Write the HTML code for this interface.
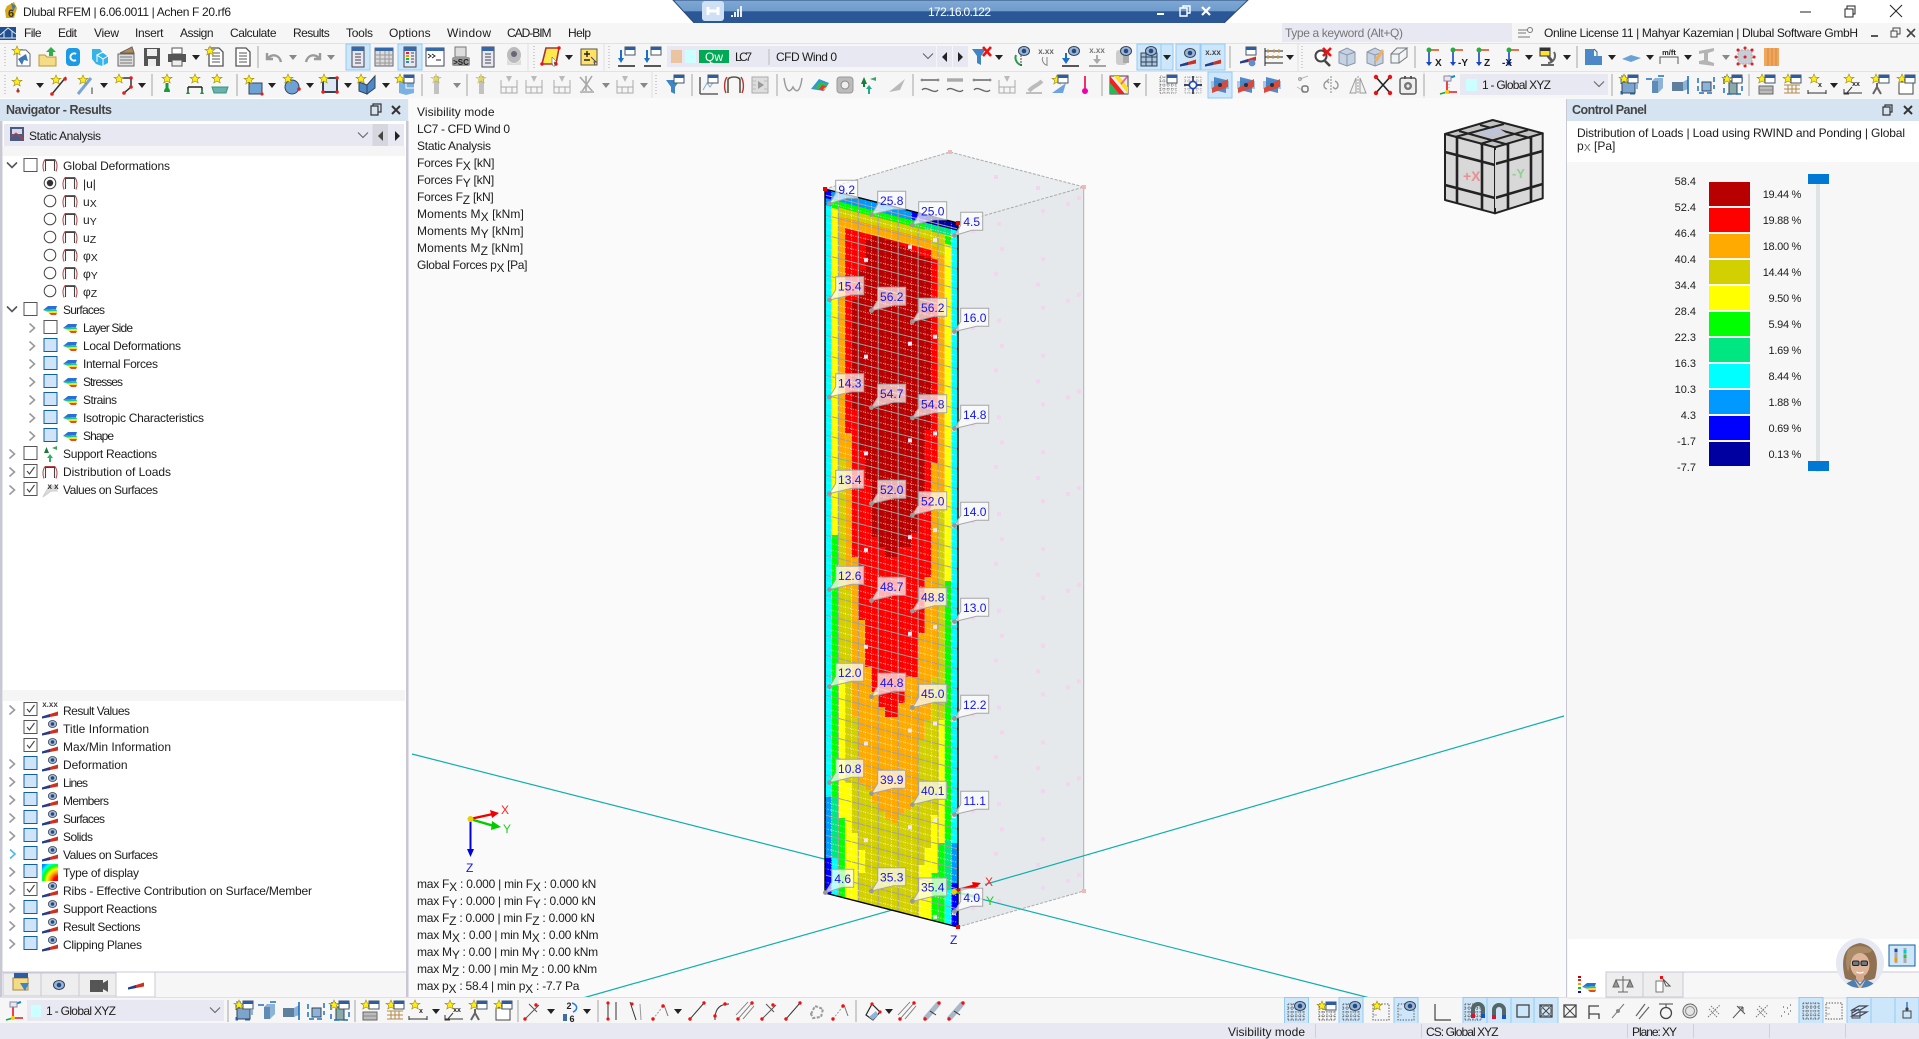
<!DOCTYPE html>
<html lang="en"><head><meta charset="utf-8"><title>Dlubal RFEM</title>
<style>
html,body{margin:0;padding:0;background:#f5f5f5;width:1919px;height:1039px;overflow:hidden}
svg{position:absolute;left:0;top:0;display:block}
text{font-family:"Liberation Sans",sans-serif;font-size:12px;fill:#1c1c1c}
.n{font-size:11px}
.p{letter-spacing:-.3px}
.h{font-size:12.5px;font-weight:bold;fill:#444}
.lb{font-size:12px;fill:#1414f0;text-anchor:middle}
.s{font-size:10.5px}
.g{fill:#777}
.e{text-anchor:end}
.m{letter-spacing:-.24px}
.f{letter-spacing:-.2px}
.k{letter-spacing:.1px}
.q{letter-spacing:-.35px}
</style></head><body>
<svg width="1919" height="1039" viewBox="0 0 1919 1039" xmlns="http://www.w3.org/2000/svg">
<defs>
<linearGradient id="rdp" x1="0" y1="0" x2="0" y2="1"><stop offset="0" stop-color="#7fa8d4"/><stop offset=".42" stop-color="#6f9ccb"/><stop offset=".45" stop-color="#2b5797"/><stop offset="1" stop-color="#2b5797"/></linearGradient>
<radialGradient id="rb" cx="1" cy="1" r="1.3"><stop offset=".2" stop-color="#f00"/><stop offset=".4" stop-color="#fa0"/><stop offset=".55" stop-color="#ff0"/><stop offset=".7" stop-color="#0f0"/><stop offset=".85" stop-color="#0ff"/><stop offset="1" stop-color="#08f"/></radialGradient>
<clipPath id="wall"><path d="M825 189 958 223V927L825 893z"/></clipPath>
<clipPath id="face"><path d="M825 189 950 152 1084 187V891L958 927 958 223z"/></clipPath>
<clipPath id="av"><ellipse cx="1860" cy="963" rx="24" ry="25"/></clipPath>
<pattern id="grid" patternUnits="userSpaceOnUse" width="19.95" height="20" patternTransform="matrix(1 .2556 0 1 825 189)">
<path d="M13.3 0V20M0 6H19.95" stroke="#a0a0a0" stroke-width="1" fill="none"/>
<path d="M0 0V20M6.65 0V20M0 13H19.95M0 19.5H19.95" stroke="#fff" stroke-width=".9" stroke-dasharray="1 1.6" opacity=".75" fill="none"/>
</pattern>
<pattern id="pk" patternUnits="userSpaceOnUse" x="0" y="172" width="1919" height="96.7">
<path fill="#f1d6ee" d="M994 3h4v4h-4zM1036 14h4v4h-4zM1077 24h4v4h-4zM1066 30h4v4h-4zM1041 37h4v4h-4zM997 50h4v4h-4zM971 57h4v4h-4zM1000 75h4v4h-4zM1041 85h4v4h-4z"/>
</pattern>
<pattern id="wh" patternUnits="userSpaceOnUse" x="0" y="172" width="1919" height="96.7">
<path fill="#f3e6f2" d="M864 86h4v4h-4zM908 73h4v4h-4zM933 66h4v4h-4zM952 62h4v4h-4z"/>
</pattern>

<path id="sp" d="M0-11V11" stroke="#a4a4a4"/>
<path id="d" d="M-4-2H4L0 3z" fill="#222"/>
<path id="dg" d="M-4-2H4L0 3z" fill="#888"/>
<rect id="ac" x="-12" y="-13" width="24" height="26" fill="#cde6f9" stroke="#93c9f5"/>
<path id="st" fill="#ffec1a" stroke="#998a10" stroke-width=".6" d="M0-5 1.4-1.8 5-1.6 2.2.4 3.2 4 0 2-3.2 4-2.2.4-5-1.6-1.4-1.8z"/>
<g id="w"><rect x="-5" y="-4" width="10" height="8" fill="#fff" stroke="#456"/><rect x="-5" y="-4" width="10" height="3" fill="#2a5ca8"/></g>
<g id="doc"><path d="M-7-9H3L7-5V9H-7z" fill="#fff" stroke="#555" stroke-width="1.3"/><path d="M-4-4H4M-4-1H4M-4 2H4M-4 5H4" stroke="#555"/></g>
<g id="i1"><path d="M-5-7H4L8-3V9H-5z" fill="#fff" stroke="#667"/><path d="M-4 2 4-3 6 4 2 3 0 8z" fill="#3a76b8"/><use href="#st" x="-5" y="-6"/></g>
<g id="i2"><path d="M-9-2H-3L-1 0H8V9H-9z" fill="#f4dc86" stroke="#b8993c"/><path d="M3-10 8-5H5V-1H1V-5H-2z" fill="#2fae4a"/></g>
<g id="i3"><rect x="-7" y="-9" width="14" height="18" rx="4" fill="#1b9ae6"/><path d="M3-3A3.6 3.6 0 1 0 3 3" stroke="#fff" stroke-width="2" fill="none"/></g>
<g id="i4"><path d="M-8-8H0L3-4 8-2V6L2 9-4 7-8 2z" fill="#35b4ec"/><path d="M-3-2 3-5 8-1 3 2zM3 2V9M-3-2V5" stroke="#fff" fill="none"/></g>
<g id="i5"><rect x="-8" y="-3" width="16" height="12" fill="#ddd" stroke="#666"/><path d="M-6 0H6M-6 3H6M-6 6H6" stroke="#777"/><path d="M-6-4 6-10 8-4z" fill="#b5895a" stroke="#665"/></g>
<g id="i6"><path d="M-8-9H8V9H-8z" fill="#555"/><rect x="-5" y="-8" width="10" height="7" fill="#eee"/><rect x="-4" y="2" width="8" height="7" fill="#eee"/></g>
<g id="i7"><rect x="-5" y="-9" width="10" height="6" fill="#fff" stroke="#555"/><rect x="-9" y="-3" width="18" height="8" fill="#555"/><rect x="-5" y="3" width="10" height="6" fill="#eee" stroke="#555"/></g>
<g id="i8"><use href="#doc"/><use href="#st" x="-6" y="-6"/></g>
<path id="i10" d="M7 5C5-3-2-3-6 1M-7-4V2H-1" fill="none" stroke="#9a9a9a" stroke-width="2.4"/>
<path id="i11" d="M-7 5C-5-3 2-3 6 1M7-4V2H1" fill="none" stroke="#9a9a9a" stroke-width="2.4"/>
<g id="p1"><rect x="-6" y="-10" width="12" height="20" fill="#e8e8ee" stroke="#445"/><rect x="-6" y="-10" width="12" height="4" fill="#3468a8"/><path d="M-3-3H3M-3 0H3M-3 3H3M-3 6H3" stroke="#445"/></g>
<g id="p2"><rect x="-9" y="-9" width="18" height="18" fill="#dcdcdc" stroke="#667"/><rect x="-9" y="-9" width="18" height="3" fill="#3468a8"/><path d="M-9-2H9M-9 2H9M-9 6H9M-4-6V9M1-6V9M5-6V9" stroke="#999"/></g>
<g id="p3"><rect x="-6" y="-10" width="12" height="20" fill="#e8e8ee" stroke="#445"/><rect x="-6" y="-10" width="12" height="4" fill="#3468a8"/><path d="M-4-4H-1" stroke="#e22" stroke-width="2"/><path d="M-4-1H-1" stroke="#e90" stroke-width="2"/><path d="M-4 2H-1" stroke="#2b2" stroke-width="2"/><path d="M-4 5H-1" stroke="#28d" stroke-width="2"/><path d="M1-4H4M1-1H4M1 2H4M1 5H4" stroke="#445"/></g>
<g id="p4"><rect x="-9" y="-9" width="18" height="18" fill="#fff" stroke="#445"/><rect x="-9" y="-9" width="18" height="3" fill="#3468a8"/><path d="M-7-3-4-1-7 1M-3-3 0-1-3 1M1 3H6" stroke="#222" fill="none"/></g>
<g id="p5"><rect x="-6" y="-10" width="11" height="10" fill="#ddd" stroke="#777"/><rect x="-9" y="0" width="18" height="9" rx="2" fill="#999"/><text x="0" y="8" style="font-size:8px;font-weight:bold;text-anchor:middle;fill:#222">&gt;SC</text></g>
<g id="p7"><ellipse cx="0" cy="-2" rx="7" ry="8" fill="#bbb"/><circle cy="-3" r="3" fill="#667"/><path d="M-7 2C-3 8 3 8 7 2V8H-7z" fill="#ddd"/></g>
<g id="a1"><path d="M-5-9H8L5 7H-9z" fill="#ffe94d" stroke="#a33" stroke-width="1.6"/><circle cx="-9" cy="7" r="1.7" fill="#e11"/><circle cx="5" cy="7" r="1.7" fill="#e11"/><circle cx="8" cy="-9" r="1.7" fill="#e11"/><path d="M1 0 6 5 3 5 4 9 2 9 1 6z" fill="#fff" stroke="#444" stroke-width=".5"/></g>
<g id="a2"><rect x="-8" y="-8" width="16" height="16" fill="#ffe168" stroke="#554"/><path d="M-5-3H1M-2-6V0M-5 3H1" stroke="#222" stroke-width="1.4"/><path d="M2 0 7 5 5 5 6 8" stroke="#446" fill="none"/></g>
<g id="a3"><use href="#w" x="4" y="-6"/><path d="M-8 9H9" stroke="#222" stroke-width="1.4"/><path d="M-5-7V2" stroke="#1b6fc6" stroke-width="2"/><path d="M-8 1H-2L-5 6z" fill="#1b6fc6"/></g>
<g id="f1"><path d="M-9-8H5L0-1V8L-4 6V-1z" fill="#3d85c6"/><path d="M2-10 10-1M10-10 2-1" stroke="#e11" stroke-width="2.6"/></g>
<g id="fn"><path d="M-9-5H5L0 2V9L-4 7V2z" fill="#3d85c6"/><use href="#w" x="4" y="-6"/></g>
<g id="ey"><ellipse cx="0" cy="0" rx="5.5" ry="4.5" fill="#9bb6d8" stroke="#345"/><circle r="2.3" fill="#234a80"/></g>
<g id="ey2"><ellipse cx="0" cy="0" rx="4.2" ry="3.5" fill="#a8bcd8" stroke="#345" stroke-width=".8"/><circle r="1.8" fill="#234a80"/></g>
<g id="e1"><use href="#ey" x="3" y="-6"/><path d="M-5-2C-7 3-3 8 1 8" fill="none" stroke="#2a9a4a" stroke-width="2"/><path d="M0-2V9" stroke="#444" stroke-dasharray="2 1"/></g>
<g id="x1"><text x="0" y="-3" style="font-size:8px;text-anchor:middle;font-weight:bold;fill:#666">x.xx</text><path d="M-3 0C-5 3-2 8 1 8M1 0V9" fill="none" stroke="#888"/></g>
<g id="e2"><use href="#ey" x="4" y="-6"/><path d="M-8 9H9" stroke="#222" stroke-width="1.4"/><path d="M-4-4V2" stroke="#1b6fc6" stroke-width="2"/><path d="M-8 1H0L-4 7z" fill="#1b6fc6"/></g>
<g id="x2"><text x="0" y="-4" style="font-size:8px;text-anchor:middle;font-weight:bold;fill:#777">x.xx</text><path d="M-8 9H9" stroke="#888" stroke-width="1.4"/><path d="M0-2V3" stroke="#aaa" stroke-width="2"/><path d="M-4 2H4L0 7z" fill="#aaa"/></g>
<g id="e3"><rect x="-7" y="-7" width="11" height="15" rx="3" fill="#ccc"/><rect x="0" y="-7" width="6" height="13" fill="#aaa"/><use href="#ey" x="3" y="-6"/></g>
<g id="g1"><rect x="-8" y="-4" width="16" height="13" fill="#a9c5df" stroke="#345"/><path d="M-8 0H8M-8 5H8M-3-4V9M3-4V9" stroke="#345"/><use href="#ey" x="2" y="-6"/></g>
<g id="wd"><path d="M-8 2.500 8-2.500V1.500L-8 4.500z" fill="#d03020"/><path d="M-8 2.500 0 0V3L-8 4.500z" fill="#1d3f94"/></g>
<g id="e4"><use href="#wd" y="5"/><use href="#ey" x="2" y="-4"/></g>
<g id="x4"><use href="#wd" y="5"/><text x="0" y="-2" style="font-size:8px;text-anchor:middle;font-weight:bold;fill:#444">x.xx</text></g>
<g id="r1"><use href="#wd" y="2"/><use href="#w" x="3" y="-6"/><circle cx="4" cy="6" r="3.4" fill="#5a8fd0"/></g>
<g id="r2"><path d="M-9-6H9M-9 0H9M-9 6H9M-9-9V9" stroke="#222"/><path d="M-7-6h2M-1-6h2M4-6h2M-7 0h2M-2 0h2M3 0h2" stroke="#b9924b" stroke-width="3"/></g>
<g id="s1"><circle cx="-2" cy="-1" r="5.5" fill="#fff" stroke="#444" stroke-width="2"/><path d="M2 4 7 9" stroke="#444" stroke-width="2.6"/><path d="M0-9 8-1M8-9 0-1" stroke="#e11" stroke-width="2.6"/></g>
<g id="c1"><path d="M-8-5 0-9 8-5V6L0 9-8 6z" fill="#c4d2e3" stroke="#8b97a8"/><path d="M-8-5 0-2 8-5M0-2V9" stroke="#8b97a8" fill="none"/></g>
<g id="c2"><use href="#c1"/><path d="M-1 3 7-8 9-6 2 5z" fill="#f0b060"/></g>
<g id="c3"><path d="M-8-3 0-3V6H-8zM-8-3-2-9H8L0-3M8-9V0L0 6" fill="#eef3f8" stroke="#777"/></g>
<g id="ax"><path d="M0-7V7" stroke="#1746c8" stroke-width="1.6"/><path d="M-3 5H3L0 9z" fill="#1746c8"/><path d="M0-7H10" stroke="#e1521b" stroke-width="1.6"/><circle cy="-7" r="2.5" fill="#2caa3c"/></g>
<g id="m1"><rect x="-8" y="-9" width="10" height="8" fill="#ffe22c" stroke="#333"/><path d="M-8-9H2V-6H-8z" fill="#333"/><path d="M6-5C9 0 5 6 0 6M-7 8H6" stroke="#666" fill="none" stroke-width="2"/><path d="M0-1 4 4" stroke="#555" stroke-width="3"/></g>
<g id="l1"><path d="M-8-8H1V-1H9V8H-8z" fill="#4c88c6"/><path d="M1-8 4-5V-1" fill="none" stroke="#2c5f98"/></g>
<g id="l2"><path d="M-9 2 0-2 10 1 0 5z" fill="#6aa2d4"/></g>
<g id="l3"><text x="0" y="-2" style="font-size:7.5px;text-anchor:middle;fill:#222;font-weight:bold">m/ft</text><path d="M-9 7V0H9V7" fill="none" stroke="#555"/></g>
<g id="l4"><path d="M-8-6 7-9V-6L1-4V4L7 6V9L-8 7V4L-3 3V-4L-8-3z" fill="#b4b4b4"/></g>
<g id="l5"><path d="M-7-7H7V7H-7z" fill="#c8ccd4" stroke="#aaa" stroke-dasharray="2 1"/><path d="M-7-7h.1M7-7h.1M0-9h.1M-9 0h.1M9 0h.1M-7 7h.1M7 7h.1M0 9h.1M0 0h.1" stroke="#d22" stroke-width="3" stroke-linecap="round"/></g>
<g id="l6"><rect x="-7" y="-9" width="15" height="18" fill="#f0a65c"/><path d="M-3-9V9M1-9V9M5-9V9" stroke="#d98a3c"/></g>
<g id="n1"><use href="#st" x="-1" y="-3"/><circle cy="6" r="1.6" fill="#d22"/><path d="M0 3V6" stroke="#444"/></g>
<g id="n2"><path d="M-7 9 7-8" stroke="#333" stroke-width="1.5"/><use href="#st" x="-3" y="-5"/><circle cx="-7" cy="9" r="1.8" fill="#d22"/><circle cx="6" cy="-6" r="1.8" fill="#d22"/></g>
<g id="n3"><path d="M-8 9 5-7" stroke="#7ba5d4" stroke-width="3"/><use href="#st" x="-3" y="-5"/><text x="6" y="9" style="font-size:9px;text-anchor:middle;fill:#666;font-weight:bold">I</text></g>
<g id="n4"><path d="M-6-7H7V2L0 8" fill="none" stroke="#333" stroke-width="1.5"/><use href="#st" x="-5" y="-6"/><circle cx="7" cy="-7" r="1.8" fill="#d22"/><circle cx="7" cy="2" r="1.8" fill="#d22"/><circle cy="8" r="1.8" fill="#d22"/></g>
<g id="n5"><use href="#st" y="-6"/><path d="M-3 7C-3 1 3 1 3 7z" fill="#199a3c"/><path d="M0-2V3" stroke="#199a3c" stroke-width="3"/></g>
<g id="n6"><use href="#st" y="-6"/><path d="M-7 2H7M-7 2V7M7 2V7" stroke="#222" stroke-width="1.4"/><path d="M-9 9H-5L-7 5zM5 9H9L7 5z" fill="#199a3c"/></g>
<g id="n7"><use href="#st" x="-3" y="-6"/><path d="M-8 2H8L6 8H-6z" fill="#6ab0b0" stroke="#397"/></g>
<g id="b1"><rect x="-5" y="-2" width="13" height="11" fill="#6ea2d6" stroke="#345"/><use href="#st" x="-5" y="-5"/><circle cx="8" cy="9" r="1.6" fill="#d22"/></g>
<g id="b2"><circle cy="2" r="7" fill="#6ea2d6" stroke="#345"/><use href="#st" x="-4" y="-6"/><circle cx="7" cy="4" r="1.8" fill="#d22"/></g>
<g id="b3"><rect x="-7" y="-7" width="14" height="14" fill="#dce8f4" stroke="#345" stroke-width="2"/><use href="#st" x="-6" y="-6"/><path d="M7-7h.1M7 7h.1M-7 7h.1" stroke="#d22" stroke-width="3.4" stroke-linecap="round"/></g>
<g id="b4"><path d="M-8-3 0 0V9L-8 6zM0 0 8-9V3L0 9z" fill="#4f88c8" stroke="#345"/><use href="#st" x="-6" y="-6"/></g>
<g id="b5"><path d="M-7-3 0-6 8-3V8L0 10-7 8z" fill="#7ab1e0"/><path d="M0-6V3H8" stroke="#fff" fill="none"/><use href="#w" x="3" y="-6"/><use href="#st" x="-6" y="-6"/></g>
<g id="gd"><path d="M-7-8 6 7M-1-9V8M5-9-6 8" stroke="#a8a8a8" stroke-width="1.6" fill="none"/><path d="M-7 7H7" stroke="#bbb" stroke-width="2"/></g>
<g id="gy"><path d="M-2-9H3V9H-2z" fill="#c2c2c2"/><use href="#st" x="0" y="-6" opacity=".5"/></g>
<g id="gf"><path d="M-8-5V8H8V-5M-8 2H8M-3 2V8M3 2V8" stroke="#aaa" fill="none"/><path d="M-3-9H3L0-3z" fill="#bbb"/></g>
<g id="c5"><path d="M-9 9V-8M-9 9H9" stroke="#444" stroke-width="1.3"/><path d="M-6 5 -2-2 1 2 5-4" fill="none" stroke="#8ac"/><use href="#w" x="4" y="-6"/></g>
<g id="c6"><path d="M-6 8V-5C-6-9 6-9 6-5V8" fill="none" stroke="#554" stroke-width="1.6"/><path d="M-7-8C-10-4-10 4-8 8M7-8C10-4 10 4 8 8" stroke="#b33" stroke-width="1.4" fill="none"/></g>
<g id="c7"><rect x="-8" y="-8" width="16" height="16" fill="#ddd" stroke="#aaa"/><path d="M-2-4 4 0-2 4z" fill="#999"/><path d="M-8-4H-4M-8 0H-4M-8 4H-4M4-4H8M4 4H8" stroke="#bbb"/></g>
<path id="c8" d="M-9-7C-7 8-3 8 0 2 3 8 7 8 9-7" fill="none" stroke="#999" stroke-width="1.4"/>
<g id="c9"><path d="M-9 4-1-6 9-2 4 6z" fill="#39c"/><path d="M-5 3 0-3 8-1 3 5z" fill="#3b5"/><path d="M-1 4 2 0 6 1 3 6z" fill="#e33"/><path d="M3 6 4 3 7 2z" fill="#fb3"/></g>
<g id="c10"><rect x="-8" y="-8" width="16" height="16" rx="3" fill="#bbb" stroke="#999"/><circle r="4" fill="#eee" stroke="#888"/></g>
<g id="c11"><path d="M-7-1H-1L-4-8z" fill="#128038"/><path d="M-4-1V2" stroke="#128038" stroke-width="2"/><path d="M2-6 8-8V-4z" fill="#3a6"/><path d="M0 9V4H-2L1 0 4 4H2V9z" fill="#2a8"/></g>
<path id="c12" d="M-8 7 8-6 3 5z" fill="#b9b9b9"/>
<g id="c13"><path d="M-8-5H8M-8 5C-4 0 4 10 8 5" stroke="#666" stroke-width="1.4" fill="none"/><circle cx="-8" cy="-5" r="1.4" fill="#888"/><circle cx="8" cy="-5" r="1.4" fill="#888"/></g>
<g id="c14"><path d="M-8-5H8" stroke="#aaa" stroke-width="3.4"/><path d="M-8 5C-4 0 4 10 8 5" stroke="#666" stroke-width="1.4" fill="none"/></g>
<g id="c15"><path d="M-5 6C-1 1 3 1 8-4" stroke="#bbb" stroke-width="4"/><path d="M-8 8H8" stroke="#888"/></g>
<g id="c16"><path d="M-8 8 6-2 3 8z" fill="#6ea2e0"/><use href="#st" x="-3" y="-5"/><use href="#w" x="3" y="-6"/></g>
<g id="c17"><path d="M0-9V4" stroke="#e04" stroke-width="1.6"/><circle cy="6" r="3" fill="#e0a"/></g>
<g id="c18"><rect x="-9" y="-9" width="18" height="18" fill="#eee" stroke="#444"/><path d="M-9 9V-2L0 9z" fill="#2b5"/><path d="M-9-2V-9L6 9H0z" fill="#e22"/><path d="M-5-9H0L9 2V9z" fill="#fd2"/><path d="M2-1 8-8" stroke="#e6a" stroke-width="2"/></g>
<g id="c19"><path d="M-8-8V8M-4-8V8M0-8V8M4-8V8M8-8V8M-8-8H8M-8-4H8M-8 0H8M-8 4H8M-8 8H8" stroke="#777" stroke-dasharray="1 1.2"/><use href="#w" x="4" y="-6"/></g>
<g id="c20"><path d="M-8-8V8M-4-8V8M4-8V8M8-8V8M-8-8H8M-8-4H8M-8 4H8M-8 8H8" stroke="#999" stroke-dasharray="1 1.2"/><path d="M-9 0H9M0-9V9" stroke="#113" stroke-width="1.4"/><circle r="3.6" fill="#fff" stroke="#1746c8" stroke-width="1.6"/></g>
<g id="pl"><path d="M-9-4 9-4 9 4-9 4z" fill="#7aa8d4" opacity=".6"/><path d="M-6-8 6-5V8L-6 5z" fill="#3e7fc4" opacity=".9"/><path d="M-8 3 8-6 8 2-8 8z" fill="#d84a3c"/><circle r="2" fill="#234"/></g>
<g id="m2"><path d="M-4-6 4-9M-7 2 0 6" stroke="#bbb"/><circle cx="-4" cy="-6" r="1.4" fill="none" stroke="#999"/><rect x="-2" y="1" width="6" height="6" rx="2" fill="none" stroke="#777" stroke-width="1.5"/></g>
<g id="m3"><path d="M0-9V9" stroke="#888" stroke-dasharray="2 1"/><path d="M-4-4C-8-2-8 3-4 4M4-4C8-2 8 3 4 4M-4-4-2-6M-4-4-2-2M4 4 2 2" stroke="#999" stroke-width="1.4" fill="none"/></g>
<g id="m4"><path d="M-2-7-8 8H-2zM2-7 8 8H2z" fill="#f3f3f3" stroke="#999"/><path d="M0-9V9" stroke="#999" stroke-dasharray="2 1"/></g>
<g id="m5"><path d="M-8-9 8 9M8-9-8 9" stroke="#222" stroke-width="1.6"/><circle cx="-7" cy="-8" r="2.2" fill="#e11"/><circle cx="7" cy="-8" r="2.2" fill="#e11"/><circle cx="-7" cy="8" r="2.2" fill="#e11"/><circle cx="7" cy="8" r="2.2" fill="#e11"/></g>
<g id="m6"><rect x="-8" y="-7" width="16" height="16" rx="2" fill="#eee" stroke="#555" stroke-width="1.4"/><rect x="-4" y="-9" width="2" height="3" fill="#555"/><rect x="2" y="-9" width="2" height="3" fill="#555"/><circle cy="1" r="4" fill="#777"/><circle cy="1" r="1.6" fill="#eee"/></g>
<g id="ga"><path d="M0 7V-5M0 7H10" stroke="#e12" stroke-width="1.6"/><path d="M0 7 -7 9" stroke="#1a3" stroke-width="1.6"/><path d="M-1-6 8-9" stroke="#18c" stroke-width="2"/><circle r="2" cx="0" cy="7" fill="#fc0"/><path d="M-3 -9H4V-4H-3z" fill="#e8e8e8" stroke="#88a"/></g>
<g id="bx1"><rect x="-7" y="-3" width="13" height="11" fill="#7ba5cf" stroke="#345"/><path d="M-8-9H8V9H-8z" fill="none" stroke="#1b6fc6" stroke-dasharray="5 7"/><use href="#st" x="-5" y="-6"/><use href="#w" x="4" y="-6"/></g>
<g id="bx2"><path d="M-3-4H3V8H-3z" fill="#5f8cb4"/><path d="M-3-4 0-7 8-7 3-4zM3-4 8-7V3L3 8z" fill="#8db4d8"/><path d="M-9-6H-3M3-9H9" stroke="#1b6fc6" stroke-width="1.6"/></g>
<g id="bx3"><path d="M-8-3H3V6H-8z" fill="#5f7f9f"/><path d="M3-3 8-6V4L3 6z" fill="#8db4d8"/><path d="M8-9V9" stroke="#1b6fc6" stroke-width="1.6"/></g>
<g id="bx4"><rect x="-4" y="-3" width="9" height="9" fill="#8db4d8" stroke="#345"/><path d="M-8-7V8H8M8-8V4" stroke="#1b6fc6" stroke-width="1.5" stroke-dasharray="5 3" fill="none"/></g>
<g id="bx5"><rect x="-4" y="-4" width="8" height="13" fill="#8aa" stroke="#345"/><path d="M-9-8H9V9H-9z" fill="none" stroke="#1b6fc6" stroke-width="1.5" stroke-dasharray="5 4"/><use href="#st" x="-6" y="-6"/><use href="#w" x="4" y="-6"/></g>
<g id="t1"><use href="#st" x="-4" y="-6"/><use href="#w" x="4" y="-6"/><rect x="-7" y="1" width="14" height="8" fill="#bbb" stroke="#666"/><path d="M-7 5H7" stroke="#888"/></g>
<g id="t2"><use href="#st" x="-4" y="-6"/><use href="#w" x="4" y="-6"/><path d="M-8 0H8M-8 4H8M-8 8H8M-4 0V8M0 0V8M4 0V8" stroke="#b4884c"/></g>
<g id="t3"><use href="#st" x="-3" y="-6"/><text x="3" y="2" style="font-size:7px;text-anchor:middle;font-weight:bold;fill:#222">x</text><path d="M-9 8H9M-9 5V9M9 5V9M-6 6V6" stroke="#333"/></g>
<g id="t4"><use href="#st" x="-4" y="-6"/><text x="3" y="1" style="font-size:7px;text-anchor:middle;font-weight:bold;fill:#222">xx</text><path d="M-9 8H9M-7 9 -1 2M-9 4V9H-4" stroke="#333" fill="none"/></g>
<g id="t5"><use href="#st" x="-4" y="-6"/><use href="#w" x="4" y="-6"/><path d="M-3-2V2L-7 9M-3 2 1 9" stroke="#666" stroke-width="2" fill="none"/></g>
<g id="t6"><rect x="-7" y="-3" width="14" height="12" fill="#fff" stroke="#444"/><use href="#st" x="-4" y="-6"/><use href="#w" x="4" y="-6"/></g>
<g id="ln"><path d="M-7 8 7-8" stroke="#333" stroke-width="1"/><circle cx="-7" cy="8" r="1.7" fill="#e11"/><circle cx="7" cy="-8" r="1.7" fill="#e11"/></g>
<g id="ln2"><path d="M-7 8 7-6M-3-7 5 1" stroke="#555" stroke-width="1"/><circle cx="-7" cy="8" r="1.7" fill="#e11"/><circle cx="4" cy="-6" r="1.7" fill="#e11"/></g>
<g id="ln3"><path d="M-7 8C-7-2-2-7 7-7" stroke="#333" fill="none" stroke-width="1"/><path d="M-7 4V9" stroke="#333"/><circle cx="-7" cy="5" r="1.7" fill="#e11"/><circle cx="3" cy="-7" r="1.7" fill="#e11"/></g>
<g id="ln4"><path d="M-7 8 7-8M-2 8 9-5M-9 4 3-9" stroke="#777" stroke-width=".9"/><circle cx="-7" cy="8" r="1.7" fill="#e11"/><circle cx="7" cy="-8" r="1.7" fill="#e11"/></g>
<g id="ln5"><path d="M-6 3-2-5 6-2 4 6-4 7z" fill="none" stroke="#999" stroke-width="2" stroke-dasharray="3 1.5"/></g>
<g id="ln6"><path d="M-7 8 4-6" stroke="#999" stroke-dasharray="2 1.5"/><path d="M4-6 8 5" stroke="#777"/><circle cx="-7" cy="8" r="1.7" fill="#e11"/><circle cx="3" cy="-5" r="1.7" fill="#e11"/></g>
<g id="ln7"><path d="M-7 8 7-8" stroke="#a8b8c8" stroke-width="5"/><circle cx="-7" cy="8" r="1.7" fill="#e11"/><circle cx="7" cy="-8" r="1.7" fill="#e11"/><path d="M-2 0 4 4" stroke="#333"/></g>
<g id="li"><path d="M-7 4-1-7 7 1 0 9z" fill="none" stroke="#222" stroke-width="1.2"/><path d="M-4 6 3 0 5 4 0 9z" fill="#8db4d8"/><circle cx="-1" cy="-7" r="1.6" fill="#e11"/><circle cx="7" cy="1" r="1.6" fill="#e11"/></g>
<g id="nm"><text x="0" y="-2" style="font-size:9px;font-weight:bold;text-anchor:middle;fill:#222">2</text><text x="3" y="11" style="font-size:9px;font-weight:bold;text-anchor:middle;fill:#222">6</text><path d="M3-8C9-6 9-1 4 1" fill="none" stroke="#2b7fd8" stroke-width="1.5"/><rect x="-6" y="3" width="4" height="7" fill="#3a6ea5"/></g>
<g id="vb"><path d="M-4-9V9M4-9V9" stroke="#333"/><circle cx="-4" cy="-8" r="1.6" fill="#e11"/><circle cx="-4" cy="8" r="1.6" fill="#e11"/></g>
<g id="gr"><path d="M-8-8V8M-4-8V8M0-8V8M4-8V8M8-8V8M-8-8H8M-8-4H8M-8 0H8M-8 4H8M-8 8H8" stroke="#555" stroke-dasharray="1.2 1.2"/></g>
<g id="ds"><path d="M-8-8H8V8H-8z" fill="none" stroke="#555" stroke-dasharray="1.4 1.4"/><path d="M-8-3H-4M-8 3H-4" stroke="#aaa"/></g>
<g id="mg"><path d="M-7 7V-1A7 7 0 0 1 7-1V7H3V-1A3 3 0 0 0-3-1V7z" fill="#566"/><rect x="-7" y="4" width="4" height="4" fill="#d13"/><rect x="3" y="4" width="4" height="4" fill="#15c"/></g>
<path id="ang" d="M-8-8V8H8" fill="none" stroke="#444" stroke-width="1.2"/>
<g id="sq"><rect x="-6" y="-6" width="12" height="12" fill="none" stroke="#444" stroke-width="1.3"/></g>
<g id="sx"><use href="#sq"/><path d="M-6-6 6 6M6-6-6 6" stroke="#444"/><circle r="5" fill="none" stroke="#777"/></g>
<g id="sxx"><use href="#sq"/><path d="M-6-6 6 6M6-6-6 6" stroke="#444"/></g>
<g id="lls"><path d="M-5 8V-5H5M-5 3H5V8" fill="none" stroke="#444" stroke-width="1.3"/></g>
<g id="sl"><path d="M-6 7 6-7" stroke="#777"/><circle r="2" fill="#888"/></g>
<g id="sl2"><path d="M-6 5 3-7M-3 8 7-4" stroke="#666" stroke-width="1.2"/></g>
<g id="to"><path d="M-7-7H7M0-7V-3" stroke="#444"/><circle cy="2" r="5.5" fill="none" stroke="#444" stroke-width="1.3"/></g>
<g id="oo"><circle r="7" fill="#e4e4e4" stroke="#666"/><circle r="4.5" fill="none" stroke="#888"/></g>
<g id="z1"><path d="M-6 6 6-6M-3-5 5 3M-5-2 3 6" stroke="#777" stroke-dasharray="1.5 1"/></g>
<g id="z2"><path d="M-6 7 4-4M4-4H-1M4-4V1M-2-5 6 3" stroke="#555"/></g>
<g id="z4"><path d="M-5 5h1M-2 1h1M1-3h1M4-6h1M-3-4h1M2 3h1M4 0h1" stroke="#777" stroke-width="1.4"/></g>
<g id="lay"><path d="M-7-1 0-5H8L1-1zM-7 2 0-2M-7 5 0 1H8L1 5z" fill="none" stroke="#445" stroke-width="1.2"/><rect x="-7" y="-1" width="8" height="8" fill="none" stroke="#445"/></g>
<g id="rb"><rect x="-8" y="-2" width="16" height="4" fill="#333"/><path d="M-9-5V5M9-5V5" stroke="#e11" stroke-width="1.6"/></g>
<g id="nd"><path d="M0-9V0" stroke="#4a80c0" stroke-width="1.6"/><rect x="-4" y="0" width="8" height="7" fill="none" stroke="#444"/><circle cy="-2" r="1.6" fill="#444"/></g>

<rect id="cb" x="-6.5" y="-6.5" width="13" height="13" fill="#fff" stroke="#555" stroke-width="1"/>
<g id="cc"><use href="#cb"/><path d="M-3.5 0-1 3 4-4" fill="none" stroke="#444" stroke-width="1.1"/></g>
<rect id="cbb" x="-6.5" y="-6.5" width="13" height="13" fill="#cfe4f8" stroke="#0d5fa6" stroke-width="1"/>
<circle id="ra" r="5.8" fill="#fff" stroke="#444"/>
<g id="rs"><use href="#ra"/><circle r="3.2" fill="#333"/></g>
<path id="ar" d="M-2.5-4.5 2.5 0-2.5 4.5" fill="none" stroke="#9a9a9a" stroke-width="1.6"/>
<path id="ad" d="M-5-2.5 0 2.5 5-2.5" fill="none" stroke="#555" stroke-width="1.6"/>
<g id="fr"><path d="M-4.500 6V-4.500H4.500V6" fill="none" stroke="#444" stroke-width="1.1"/><path d="M-5-5.500C-7.500-2-7.500 3-6 6.500M5-5.500C7.500-2 7.500 3 6 6.500M-5-5.500H5" stroke="#b04040" stroke-width="1" fill="none"/></g>
<g id="sf"><path d="M-7 0-2-4H7L6-1z" fill="#2a6fd8"/><path d="M-7 0 6-1 7 1-3 1.500z" fill="#1cc4a0"/><path d="M-3 1.500 7 1 7 3-1 3z" fill="#f6e020"/><path d="M-1 3 7 3 6 5 1 5z" fill="#e8482a"/></g>
<g id="sr"><path d="M-6-1H-1L-3.500-7z" fill="#1a7a3a"/><path d="M2-6 7-8V-4z" fill="#3aa860"/><path d="M-1 8V4H-3L0 0 3 4H1V8z" fill="#2fae66"/></g>
<g id="vs"><path d="M-7 7-1-4H7V1H1z" fill="#ddd" stroke="#ccc"/><text x="3" y="-1" style="font-size:8px;font-weight:bold;text-anchor:middle;fill:#333">x x</text></g>
<g id="tw"><use href="#wd" y="4"/><use href="#ey2" x="2.500" y="-3"/></g>
<path id="chv" d="M-5-2.5 0 2.5 5-2.5" fill="none" stroke="#666" stroke-width="1.1"/>
<path id="c28" d="M0 0H28V18H16L-6.3 23.3 0 13Z" fill="#fff" fill-opacity=".7" stroke="#a6a6a6"/>
<path id="c22" d="M0 0H22V18H11L-6.3 23.3 0 13Z" fill="#fff" fill-opacity=".7" stroke="#a6a6a6"/>
<circle id="tp" r="2.4" fill="#999"/>
</defs>

<!-- base -->
<rect width="1919" height="1039" fill="#f6f6f6"/>
<rect width="1919" height="23" fill="#fff"/>
<rect x="409" y="98" width="1158" height="900" fill="#fafafa"/>

<!-- title bar -->
<g><path d="M7 6 14 2 17 8 14 18H6L5 10z" fill="#d8a818"/><path d="M11 3 16 6 13 11z" fill="#4a78a8"/><text x="8" y="17" style="font-size:11px;font-weight:bold;fill:#333">6</text></g>
<text x="23" y="16" textLength="208">Dlubal RFEM | 6.06.0011 | Achen F 20.rf6</text>
<path d="M1800 12H1811" stroke="#222"/><path d="M1845 9V17H1853V9zM1847 9V6H1855V14H1853" fill="none" stroke="#222"/><path d="M1890 5 1902 17M1902 5 1890 17" stroke="#222"/>
<!-- RDP -->
<path d="M673 0 697 26H1221L1248 0z" fill="url(#rdp)" stroke="#2a4a78"/>
<rect x="702" y="1" width="22" height="20" rx="3" fill="#cfe0f4"/><path d="M708 7V15M718 7V15M708 11H718" stroke="#fff" stroke-width="3"/>
<path d="M731 15h2v2h-2zM734 12h2v5h-2zM737 9h2v8h-2zM740 6h2v11h-2z" fill="#e8eef6"/>
<text x="928" y="16" style="fill:#fff" textLength="63">172.16.0.122</text>
<path d="M1157 14H1164" stroke="#fff" stroke-width="2"/><path d="M1180 8V16H1187V8zM1183 8V6H1190V13H1187" fill="none" stroke="#fff" stroke-width="1.4"/><path d="M1202 7 1210 15M1210 7 1202 15" stroke="#fff" stroke-width="2.2"/>

<!-- menu bar -->
<rect x="0" y="23" width="1919" height="20" fill="#f6f6f6"/>
<rect x="0" y="27" width="16" height="13" fill="#1f4f8e"/><path d="M0 35 8 28 16 34M4 32V38M12 31V38M0 38H16" stroke="#dfe8f4" fill="none"/>
<g>
<text x="24" y="37" textLength="17.500">File</text><text x="58" y="37" textLength="19">Edit</text><text x="94" y="37" textLength="25">View</text><text x="135" y="37" textLength="28.500">Insert</text><text x="180" y="37" textLength="33.500">Assign</text><text x="230" y="37" textLength="46.500">Calculate</text><text x="293" y="37" textLength="36.700">Results</text><text x="346" y="37" textLength="27">Tools</text><text x="389" y="37" textLength="41.600">Options</text><text x="447" y="37" textLength="44">Window</text><text x="507" y="37" textLength="44.500">CAD-BIM</text><text x="568" y="37" textLength="23">Help</text>
</g>
<rect x="1282" y="23" width="230" height="19" fill="#e8e8f2"/>
<text x="1285" y="37" class="g" textLength="118">Type a keyword (Alt+Q)</text>
<path d="M1518 30H1528M1518 33H1526M1518 37H1530" stroke="#777"/><circle cx="1530" cy="30" r="2.5" fill="none" stroke="#777"/>
<text x="1544" y="37" textLength="314">Online License 11 | Mahyar Kazemian | Dlubal Software GmbH</text>
<path d="M1871 36H1878" stroke="#555" stroke-width="2"/><path d="M1891 31V37H1897V31zM1893 31V28H1900V34H1897" fill="none" stroke="#444"/><path d="M1907 29 1915 37M1915 29 1907 37" stroke="#444" stroke-width="1.6"/>

<!-- toolbars lines -->
<path d="M0 43.5H1919M0 71.5H1919" stroke="#e2e2e2"/>
<path d="M5 47V68M5 75V95M534 46V68M609 46V68M656 75V95M1161 75V95M1302 46V68M1449 75V95" stroke="#aaa" stroke-dasharray="1 2"/>
<path d="M528 43V71M652 71V98M1424 71V98M1298 43V71M604 43V71" stroke="#e0e0e0"/>

<!-- toolbar 1 -->
<use href="#ac" x="358" y="57"/><use href="#ac" x="410" y="57"/>
<use href="#ac" x="1149" y="57"/><rect x="1161" y="44" width="12" height="26" fill="#cde6f9" stroke="#93c9f5"/><use href="#ac" x="1188" y="57"/><use href="#ac" x="1213" y="57"/>
<g>
<use href="#i1" x="22" y="57"/><use href="#i2" x="48" y="57"/><use href="#i3" x="73" y="57"/><use href="#i4" x="100" y="57"/><use href="#i5" x="126" y="57"/><use href="#i6" x="152" y="57"/><use href="#i7" x="177" y="57"/><use href="#d" x="196" y="57"/><use href="#i8" x="216" y="57"/><use href="#doc" x="243" y="57"/><use href="#sp" x="258" y="57"/><use href="#i10" x="274" y="57"/><use href="#dg" x="293" y="57"/><use href="#i11" x="313" y="57"/><use href="#dg" x="331" y="57"/>
<use href="#p1" x="358" y="57"/><use href="#p2" x="384" y="57"/><use href="#p3" x="410" y="57"/><use href="#p4" x="435" y="57"/><use href="#p5" x="461" y="57"/><use href="#p1" x="488" y="57"/><use href="#p7" x="514" y="57"/>
<use href="#a1" x="551" y="57"/><use href="#d" x="569" y="57"/><use href="#a2" x="589" y="57"/><use href="#a3" x="626" y="57"/><use href="#a3" x="652" y="57"/>
</g>
<rect x="667" y="46" width="269" height="21" fill="#e8e8f2"/>
<rect x="671" y="50" width="11" height="13" fill="#eac4a0"/><rect x="685" y="50" width="11" height="13" fill="#ccffff"/>
<rect x="699" y="50" width="30" height="13" fill="#00aa55"/><text x="714" y="61" style="fill:#fff;text-anchor:middle">Qw</text>
<text x="735" y="61" textLength="17">LC7</text><path d="M769 49V65" stroke="#bbb"/><text x="776" y="61" textLength="61">CFD Wind 0</text><use href="#chv" x="928" y="56"/>
<rect x="937" y="46" width="15" height="21" fill="#e8e8f2"/><rect x="953" y="46" width="15" height="21" fill="#e8e8f2"/>
<path d="M947 52 942 57 947 62z" fill="#222"/><path d="M958 52 963 57 958 62z" fill="#222"/>
<g>
<use href="#f1" x="981" y="57"/><use href="#d" x="999" y="57"/><use href="#e1" x="1021" y="57"/><use href="#x1" x="1046" y="57"/><use href="#e2" x="1070" y="57"/><use href="#x2" x="1097" y="57"/><use href="#e3" x="1123" y="57"/><use href="#g1" x="1149" y="57"/><use href="#d" x="1167" y="57"/><use href="#e4" x="1188" y="57"/><use href="#x4" x="1213" y="57"/><use href="#sp" x="1230" y="57"/><use href="#r1" x="1248" y="57"/><use href="#r2" x="1274" y="57"/><use href="#d" x="1290" y="57"/>
<use href="#s1" x="1323" y="57"/><use href="#c1" x="1347" y="57"/><use href="#c2" x="1375" y="57"/><use href="#c3" x="1399" y="57"/><use href="#sp" x="1415" y="57"/>
<use href="#ax" x="1429" y="57"/><text x="1435" y="66" style="font-size:10px;font-weight:bold">X</text><use href="#ax" x="1453" y="57"/><text x="1458" y="66" style="font-size:10px;font-weight:bold">-Y</text><use href="#ax" x="1479" y="57"/><text x="1484" y="66" style="font-size:10px;font-weight:bold">Z</text><use href="#ax" x="1509" y="57"/><text x="1502" y="66" style="font-size:10px;font-weight:bold">-X</text>
<use href="#d" x="1529" y="57"/><use href="#m1" x="1548" y="57"/><use href="#d" x="1567" y="57"/><use href="#sp" x="1577" y="57"/><use href="#l1" x="1593" y="57"/><use href="#d" x="1612" y="57"/><use href="#l2" x="1631" y="57"/><use href="#d" x="1650" y="57"/><use href="#l3" x="1669" y="57"/><use href="#d" x="1688" y="57"/><use href="#l4" x="1707" y="57"/><use href="#dg" x="1726" y="57"/><use href="#l5" x="1745" y="57"/><use href="#l6" x="1771" y="57"/>
</g>

<!-- toolbar 2 -->
<use href="#ac" x="1220" y="85"/>
<g>
<use href="#n1" x="18" y="85"/><use href="#d" x="40" y="85"/><use href="#n2" x="59" y="85"/><use href="#n3" x="86" y="85"/><use href="#d" x="104" y="85"/><use href="#n4" x="124" y="85"/><use href="#d" x="142" y="85"/><use href="#sp" x="152" y="85"/><use href="#n5" x="167" y="85"/><use href="#n6" x="195" y="85"/><use href="#n7" x="220" y="85"/><use href="#sp" x="237" y="85"/><use href="#b1" x="254" y="85"/><use href="#d" x="272" y="85"/><use href="#b2" x="292" y="85"/><use href="#d" x="310" y="85"/><use href="#b3" x="330" y="85"/><use href="#d" x="348" y="85"/><use href="#b4" x="367" y="85"/><use href="#d" x="386" y="85"/><use href="#b5" x="406" y="85"/><use href="#sp" x="422" y="85"/><use href="#gy" x="436" y="85"/><use href="#dg" x="457" y="85"/><use href="#sp" x="467" y="85"/><use href="#gy" x="481" y="85"/><use href="#gf" x="509" y="85"/><use href="#gf" x="534" y="85"/><use href="#gf" x="562" y="85"/><use href="#gd" x="587" y="85"/><use href="#dg" x="606" y="85"/><use href="#gf" x="625" y="85"/><use href="#dg" x="644" y="85"/>
<use href="#fn" x="675" y="85"/><use href="#sp" x="692" y="85"/><use href="#c5" x="709" y="85"/><use href="#c6" x="734" y="85"/><use href="#c7" x="760" y="85"/><use href="#sp" x="777" y="85"/><use href="#c8" x="793" y="85"/><use href="#c9" x="820" y="85"/><use href="#c10" x="845" y="85"/><use href="#c11" x="868" y="85"/><use href="#c12" x="897" y="85"/><use href="#sp" x="913" y="85"/><use href="#c13" x="930" y="85"/><use href="#c14" x="955" y="85"/><use href="#c13" x="982" y="85"/><use href="#gf" x="1007" y="85"/><use href="#c15" x="1034" y="85"/><use href="#c16" x="1060" y="85"/><use href="#c17" x="1085" y="85"/><use href="#sp" x="1102" y="85"/><use href="#c18" x="1119" y="85"/><use href="#d" x="1137" y="85"/><use href="#sp" x="1146" y="85"/><use href="#c19" x="1168" y="85"/><use href="#c20" x="1193" y="85"/><use href="#pl" x="1220" y="85"/><use href="#pl" x="1246" y="85"/><use href="#pl" x="1272" y="85"/>
<use href="#m2" x="1304" y="85"/><use href="#m3" x="1331" y="85"/><use href="#m4" x="1358" y="85"/><use href="#m5" x="1383" y="85"/><use href="#m6" x="1408" y="85"/><use href="#sp" x="1424" y="85"/><use href="#ga" x="1447" y="85"/>
</g>
<rect x="1460" y="74" width="148" height="21" fill="#e8e8f2"/><rect x="1466" y="79" width="11" height="12" fill="#ccffff"/><text x="1482" y="89" textLength="69">1 - Global XYZ</text><use href="#chv" x="1599" y="84"/>
<g>
<use href="#sp" x="1612" y="85"/><use href="#bx1" x="1629" y="85"/><use href="#bx2" x="1655" y="85"/><use href="#bx3" x="1680" y="85"/><use href="#bx4" x="1706" y="85"/><use href="#bx5" x="1733" y="85"/><use href="#sp" x="1749" y="85"/><use href="#t1" x="1766" y="85"/><use href="#t2" x="1792" y="85"/><use href="#t3" x="1817" y="85"/><use href="#d" x="1834" y="85"/><use href="#t4" x="1853" y="85"/><use href="#t5" x="1880" y="85"/><use href="#t6" x="1906" y="85"/>
</g>

<!-- Navigator -->
<rect x="0" y="98" width="408" height="900" fill="#fff"/>
<rect x="0" y="99" width="408" height="22" fill="#d6e4f2"/>
<text x="6" y="114" class="h" textLength="106">Navigator - Results</text>
<path d="M371 106V115H378V106zM373 106V104H381V112H378" fill="none" stroke="#333" stroke-width="1.2"/><path d="M392 106 400 114M400 106 392 114" stroke="#333" stroke-width="2"/>
<rect x="0" y="121" width="2.5" height="877" fill="#c8c8d4"/><rect x="406" y="121" width="2.5" height="877" fill="#c8c8d4"/>
<rect x="4" y="124" width="400" height="22" fill="#e8e8f2"/>
<rect x="3" y="146" width="402" height="10" fill="#f5f5f5"/>
<rect x="372.5" y="124" width="15.5" height="22" fill="#d6d6df"/>
<rect x="10" y="127" width="14" height="14" fill="#4a5a80"/><rect x="12" y="129" width="10" height="5" fill="#d8d8e8"/><path d="M11 137 16 133 23 139" stroke="#d33" fill="none"/>
<text x="29" y="140" textLength="72">Static Analysis</text><use href="#chv" x="363" y="135"/>
<path d="M383 131 378 136 383 141z" fill="#444"/><path d="M395 131 400 136 395 141z" fill="#222"/>

<g id="tree1">
<use href="#ad" x="12" y="165"/><use href="#cb" x="30.5" y="165"/><use href="#fr" x="50" y="165"/><text x="63" y="170" textLength="107">Global Deformations</text>
<use href="#rs" x="50" y="183"/><use href="#fr" x="70" y="183"/><text x="83" y="188">|u|</text>
<use href="#ra" x="50" y="201"/><use href="#fr" x="70" y="201"/><text x="83" y="206">u<tspan class="s" dy="1">X</tspan></text>
<use href="#ra" x="50" y="219"/><use href="#fr" x="70" y="219"/><text x="83" y="224">u<tspan class="s" dy="1">Y</tspan></text>
<use href="#ra" x="50" y="237"/><use href="#fr" x="70" y="237"/><text x="83" y="242">u<tspan class="s" dy="1">Z</tspan></text>
<use href="#ra" x="50" y="255"/><use href="#fr" x="70" y="255"/><text x="83" y="260">φ<tspan class="s" dy="1">X</tspan></text>
<use href="#ra" x="50" y="273"/><use href="#fr" x="70" y="273"/><text x="83" y="278">φ<tspan class="s" dy="1">Y</tspan></text>
<use href="#ra" x="50" y="291"/><use href="#fr" x="70" y="291"/><text x="83" y="296">φ<tspan class="s" dy="1">Z</tspan></text>
<use href="#ad" x="12" y="309"/><use href="#cb" x="30.5" y="309"/><use href="#sf" x="50" y="310"/><text x="63" y="314" textLength="42">Surfaces</text>
<use href="#ar" x="32" y="328"/><use href="#cb" x="50.5" y="327"/><use href="#sf" x="70" y="328"/><text x="83" y="332" textLength="50">Layer Side</text>
<use href="#ar" x="32" y="346"/><use href="#cbb" x="50.5" y="345"/><use href="#sf" x="70" y="346"/><text x="83" y="350" textLength="98">Local Deformations</text>
<use href="#ar" x="32" y="364"/><use href="#cbb" x="50.5" y="363"/><use href="#sf" x="70" y="364"/><text x="83" y="368" textLength="75">Internal Forces</text>
<use href="#ar" x="32" y="382"/><use href="#cbb" x="50.5" y="381"/><use href="#sf" x="70" y="382"/><text x="83" y="386" textLength="40">Stresses</text>
<use href="#ar" x="32" y="400"/><use href="#cbb" x="50.5" y="399"/><use href="#sf" x="70" y="400"/><text x="83" y="404" textLength="34">Strains</text>
<use href="#ar" x="32" y="418"/><use href="#cbb" x="50.5" y="417"/><use href="#sf" x="70" y="418"/><text x="83" y="422" textLength="121">Isotropic Characteristics</text>
<use href="#ar" x="32" y="436"/><use href="#cbb" x="50.5" y="435"/><use href="#sf" x="70" y="436"/><text x="83" y="440" textLength="31">Shape</text>
<use href="#ar" x="12" y="454"/><use href="#cb" x="30.5" y="453"/><use href="#sr" x="50" y="454"/><text x="63" y="458" textLength="94">Support Reactions</text>
<use href="#ar" x="12" y="472"/><use href="#cc" x="30.5" y="471"/><use href="#fr" x="50" y="472"/><text x="63" y="476" textLength="108">Distribution of Loads</text>
<use href="#ar" x="12" y="490"/><use href="#cc" x="30.5" y="489"/><use href="#vs" x="50" y="490"/><text x="63" y="494" textLength="95">Values on Surfaces</text>
</g>
<rect x="3" y="690" width="402" height="11" fill="#f5f5f5"/>
<g id="tree2">
<use href="#ar" x="12" y="710"/><use href="#cc" x="30.5" y="709"/><use href="#x4" x="50" y="709"/><text x="63" y="715" textLength="67">Result Values</text>
<use href="#cc" x="30.5" y="727"/><use href="#tw" x="50" y="727"/><text x="63" y="733" textLength="86">Title Information</text>
<use href="#cc" x="30.5" y="745"/><use href="#tw" x="50" y="745"/><text x="63" y="751" textLength="108">Max/Min Information</text>
<use href="#ar" x="12" y="764"/><use href="#cbb" x="30.5" y="763"/><use href="#tw" x="50" y="763"/><text x="63" y="769" textLength="64.500">Deformation</text>
<use href="#ar" x="12" y="782"/><use href="#cbb" x="30.5" y="781"/><use href="#tw" x="50" y="781"/><text x="63" y="787" textLength="25">Lines</text>
<use href="#ar" x="12" y="800"/><use href="#cbb" x="30.5" y="799"/><use href="#tw" x="50" y="799"/><text x="63" y="805" textLength="46">Members</text>
<use href="#ar" x="12" y="818"/><use href="#cbb" x="30.5" y="817"/><use href="#tw" x="50" y="817"/><text x="63" y="823" textLength="42">Surfaces</text>
<use href="#ar" x="12" y="836"/><use href="#cbb" x="30.5" y="835"/><use href="#tw" x="50" y="835"/><text x="63" y="841" textLength="30">Solids</text>
<path d="M10 849.500 15 854 10 858.500" fill="none" stroke="#4ab8f0" stroke-width="1.6"/><use href="#cbb" x="30.5" y="853"/><use href="#tw" x="50" y="853"/><text x="63" y="859" textLength="95">Values on Surfaces</text>
<use href="#ar" x="12" y="872"/><use href="#cbb" x="30.5" y="871"/><rect x="42" y="864" width="16" height="17" fill="url(#rb)"/><text x="63" y="877" textLength="76">Type of display</text>
<use href="#ar" x="12" y="890"/><use href="#cc" x="30.5" y="889"/><use href="#tw" x="50" y="889"/><text x="63" y="895" textLength="249">Ribs - Effective Contribution on Surface/Member</text>
<use href="#ar" x="12" y="908"/><use href="#cbb" x="30.5" y="907"/><use href="#tw" x="50" y="907"/><text x="63" y="913" textLength="94">Support Reactions</text>
<use href="#ar" x="12" y="926"/><use href="#cbb" x="30.5" y="925"/><use href="#tw" x="50" y="925"/><text x="63" y="931" textLength="77.500">Result Sections</text>
<use href="#ar" x="12" y="944"/><use href="#cbb" x="30.5" y="943"/><use href="#tw" x="50" y="943"/><text x="63" y="949" textLength="79">Clipping Planes</text>
</g>
<!-- nav tabs -->
<rect x="2" y="972" width="404" height="25" fill="#f6f6f6"/>
<path d="M0 972H116M155 972H408" stroke="#c8c8d4"/>
<rect x="3" y="973" width="38" height="23" fill="#eee" stroke="#c8c8d4"/><rect x="41" y="973" width="38" height="23" fill="#eee" stroke="#c8c8d4"/><rect x="79" y="973" width="37" height="23" fill="#eee" stroke="#c8c8d4"/>
<rect x="116" y="972" width="39" height="25" fill="#fff" stroke="#c8c8d4"/>
<rect x="13" y="978" width="15" height="12" fill="#f4dc86" stroke="#a84"/><rect x="14" y="973" width="14" height="5" fill="#2a5ca8"/><path d="M20 983 29 983 25 991z" fill="#3d85c6"/>
<g transform="translate(59 985)"><use href="#ey"/></g>
<path d="M90 980H103V992H90zM103 983 108 980V992L103 989z" fill="#555"/>
<use href="#wd" x="136" y="985"/>

<!-- viewport -->
<g>
<path d="M958 223 1084 187V891L958 927z" fill="#e5e9ec"/>
<path d="M825 189 950 152 1084 187 958 223z" fill="#e9edef"/>
<rect x="825" y="150" width="262" height="780" fill="url(#pk)" clip-path="url(#face)"/>
<path d="M825 189 950 152 1084 187 958 223" fill="none" stroke="#aaa" stroke-dasharray="3 1.500"/>
<path d="M1083.700 187V891" stroke="#b0b0b0"/><path d="M958 927 1084 891" stroke="#aaa" stroke-dasharray="3 1.500"/>
<rect x="948" y="150" width="4" height="4" fill="#f0b8b8"/><rect x="1082" y="185" width="4" height="4" fill="#f0b8b8"/><rect x="1082" y="889" width="4" height="4" fill="#f0b8b8"/>
<!-- axis lines -->
<path d="M412 754 1370 998M985 884.500 1564 716M583 998 892 910" stroke="#11aeb0" stroke-width="1.200" fill="none"/>
</g>
<!-- wall -->
<g clip-path="url(#wall)">
<g transform="translate(825 0) scale(6.65 1)" fill="none" stroke-width="1">
<path stroke="#f00" d="M3.5 190V433M4.5 190V557M5.5 190V620M6.5 190V667M7.5 190V692M8.5 190V707M9.5 190V717M10.5 190V717M11.5 190V703M12.5 190V677M13.5 190V677M14.5 190V633M15.5 190V577M16.5 190V463"/>
<path stroke="#b90000" d="M4.5 300V410M5.5 270V450M6.5 240V480M7.500 232V537M8.5 236V547M9.5 240V557M10.5 242V557M11.5 246V547M12.5 248V547M13.5 252V533M14.5 256V497M15.5 258V430"/>
<path stroke="#ffaa00" d="M2.5 190V457M3.5 433V590M4.5 557V717M5.5 620V783M6.5 667V790M7.5 692V803M8.5 707V812M9.5 717V820M10.5 717V823M11.5 703V813M12.5 677V810M13.5 677V800M14.5 633V740M15.5 577V720M16.5 463V677M17.5 190V510"/>
<path stroke="#d2d000" d="M2.5 457V680M3.5 590V783M4.5 717V833M5.5 783V850M5.5 873V930M6.5 790V930M7.5 803V930M8.5 812V930M9.5 820V930M10.5 823V930M11.5 813V930M12.5 810V930M13.5 800V930M14.5 740V865M15.5 720V848M16.5 677V815M17.5 510V720"/>
<path stroke="#ff0" d="M1.5 190V535M2.5 680V818M3.5 783V930M4.5 833V930M5.5 850V873M14.5 865V930M15.5 848V930M16.5 815V873M17.5 720V843M18.5 190V581"/>
<path stroke="#0f0" d="M1.5 535V797M2.5 818V930M16.5 873V930M17.5 843V930M18.5 581V840"/>
<path stroke="#00e680" d="M1.5 797V858M18.5 840V890"/>
<path stroke="#0ff" d="M.5 190V797M1.5 858V930M18.5 890V930M19.5 190V843"/>
<path stroke="#09f" d="M.5 797V858M19.5 843V883"/>
<path stroke="#00f" d="M.5 858V930M19.5 883V930"/>
</g>
<g transform="matrix(6.65 1.7 0 1 825 189)">
<path fill="#09f" d="M1 0H15V9H1zM0 9H1V16H0z"/>
<path fill="#00f" d="M0 0H1V9H0zM13 0H15V8H13z"/>
<path fill="#0000a0" d="M15 0H20V8H15z"/>
<path fill="#0f0" d="M1 9H2V17H1zM2 9H15V15H2zM18 16H19V24H18z"/>
<path fill="#00e680" d="M15 8H19V15H15z"/>
<path fill="#0ff" d="M19 8H20V20H19z"/>
<path fill="#d2d000" d="M2 15H15V24H2zM15 14H16V24H15zM16 15H17V30H16zM17 15H18V36H17z"/>
<path fill="#ffaa00" d="M3 24H16V34H3zM16 30H17V42H16z"/>
</g>
<rect x="825" y="185" width="134" height="745" fill="url(#grid)"/>
<rect x="825" y="185" width="134" height="745" fill="url(#wh)"/>
</g>
<path d="M825 189 958 223V927L825 893z" fill="none" stroke="#000" stroke-width="1.400"/>
<rect x="823" y="187" width="4" height="4" fill="#e00"/><rect x="956" y="221" width="4" height="4" fill="#e00"/><rect x="956" y="925" width="4" height="4" fill="#e00"/>

<!-- callouts -->
<g>
<use href="#c22" x="835.700" y="180.300"/><use href="#tp" x="829.400" y="203.600"/><text x="846.700" y="194" class="lb">9.2</text>
<use href="#c28" x="835.700" y="276.700"/><use href="#tp" x="829.400" y="300"/><text x="849.700" y="290.400" class="lb">15.4</text>
<use href="#c28" x="835.700" y="373.700"/><use href="#tp" x="829.400" y="397"/><text x="849.700" y="387.400" class="lb">14.3</text>
<use href="#c28" x="835.700" y="470.300"/><use href="#tp" x="829.400" y="493.600"/><text x="849.700" y="484" class="lb">13.4</text>
<use href="#c28" x="835.700" y="566.300"/><use href="#tp" x="829.400" y="589.600"/><text x="849.700" y="580" class="lb">12.6</text>
<use href="#c28" x="835.700" y="663.300"/><use href="#tp" x="829.400" y="686.600"/><text x="849.700" y="677" class="lb">12.0</text>
<use href="#c28" x="835.700" y="759.300"/><use href="#tp" x="829.400" y="782.600"/><text x="849.700" y="773" class="lb">10.8</text>
<use href="#c22" x="831.700" y="869.300"/><use href="#tp" x="825.400" y="892.600"/><text x="842.700" y="883" class="lb">4.6</text>

<use href="#c28" x="877.700" y="191.300"/><use href="#tp" x="871.400" y="214.600"/><text x="891.700" y="205" class="lb">25.8</text>
<use href="#c28" x="877.700" y="287.300"/><use href="#tp" x="871.400" y="310.600"/><text x="891.700" y="301" class="lb">56.2</text>
<use href="#c28" x="877.700" y="384.300"/><use href="#tp" x="871.400" y="407.600"/><text x="891.700" y="398" class="lb">54.7</text>
<use href="#c28" x="877.700" y="480.300"/><use href="#tp" x="871.400" y="503.600"/><text x="891.700" y="494" class="lb">52.0</text>
<use href="#c28" x="877.700" y="577.300"/><use href="#tp" x="871.400" y="600.600"/><text x="891.700" y="591" class="lb">48.7</text>
<use href="#c28" x="877.700" y="673.300"/><use href="#tp" x="871.400" y="696.600"/><text x="891.700" y="687" class="lb">44.8</text>
<use href="#c28" x="877.700" y="770.300"/><use href="#tp" x="871.400" y="793.600"/><text x="891.700" y="784" class="lb">39.9</text>
<use href="#c28" x="877.700" y="867.700"/><use href="#tp" x="871.400" y="891"/><text x="891.700" y="881.400" class="lb">35.3</text>

<use href="#c28" x="918.700" y="201.700"/><use href="#tp" x="912.400" y="225"/><text x="932.700" y="215.400" class="lb">25.0</text>
<use href="#c28" x="918.700" y="298.300"/><use href="#tp" x="912.400" y="321.600"/><text x="932.700" y="312" class="lb">56.2</text>
<use href="#c28" x="918.700" y="394.700"/><use href="#tp" x="912.400" y="418"/><text x="932.700" y="408.400" class="lb">54.8</text>
<use href="#c28" x="918.700" y="491.700"/><use href="#tp" x="912.400" y="515"/><text x="932.700" y="505.400" class="lb">52.0</text>
<use href="#c28" x="918.700" y="587.700"/><use href="#tp" x="912.400" y="611"/><text x="932.700" y="601.400" class="lb">48.8</text>
<use href="#c28" x="918.700" y="684.300"/><use href="#tp" x="912.400" y="707.600"/><text x="932.700" y="698" class="lb">45.0</text>
<use href="#c28" x="918.700" y="781.300"/><use href="#tp" x="912.400" y="804.600"/><text x="932.700" y="795" class="lb">40.1</text>
<use href="#c28" x="918.700" y="878"/><use href="#tp" x="912.400" y="901.300"/><text x="932.700" y="891.700" class="lb">35.4</text>

<use href="#c22" x="960.700" y="212.300"/><use href="#tp" x="954.400" y="235.600"/><text x="971.700" y="226" class="lb">4.5</text>
<use href="#c28" x="960.700" y="308.300"/><use href="#tp" x="954.400" y="331.600"/><text x="974.700" y="322" class="lb">16.0</text>
<use href="#c28" x="960.700" y="405.300"/><use href="#tp" x="954.400" y="428.600"/><text x="974.700" y="419" class="lb">14.8</text>
<use href="#c28" x="960.700" y="502.300"/><use href="#tp" x="954.400" y="525.600"/><text x="974.700" y="516" class="lb">14.0</text>
<use href="#c28" x="960.700" y="598.300"/><use href="#tp" x="954.400" y="621.600"/><text x="974.700" y="612" class="lb">13.0</text>
<use href="#c28" x="960.700" y="695.300"/><use href="#tp" x="954.400" y="718.600"/><text x="974.700" y="709" class="lb">12.2</text>
<use href="#c28" x="960.700" y="791.300"/><use href="#tp" x="954.400" y="814.600"/><text x="974.700" y="805" class="lb">11.1</text>
</g>
<!-- model axes at base -->
<path d="M955 891 978 885" stroke="#e00" stroke-width="3"/><path d="M972 882 981 883 974 889z" fill="#e00"/>
<path d="M955 892 975 896" stroke="#3c3" stroke-width="2"/>
<circle cx="954" cy="891.700" r="3" fill="#e8d000"/>
<use href="#c22" x="960.700" y="888.300"/><use href="#tp" x="954.400" y="911.600"/><text x="971.700" y="902" class="lb">4.0</text>
<text x="985" y="886" style="font-size:12px;fill:#f22">X</text><text x="986" y="905" style="font-size:12px;fill:#2c2">Y</text><text x="950" y="944" style="font-size:12px;fill:#1414f0">Z</text>

<!-- info text -->
<g>
<text x="417" y="116" textLength="77.500">Visibility mode</text>
<text x="417" y="133" textLength="93">LC7 - CFD Wind 0</text>
<text x="417" y="150" textLength="74">Static Analysis</text>
<text x="417" y="167" class="f">Forces F<tspan dy="3">X</tspan><tspan dy="-3"> [kN]</tspan></text>
<text x="417" y="184" class="f">Forces F<tspan dy="3">Y</tspan><tspan dy="-3"> [kN]</tspan></text>
<text x="417" y="201" class="f">Forces F<tspan dy="3">Z</tspan><tspan dy="-3"> [kN]</tspan></text>
<text x="417" y="218" class="k">Moments M<tspan dy="3">X</tspan><tspan dy="-3"> [kNm]</tspan></text>
<text x="417" y="235" class="k">Moments M<tspan dy="3">Y</tspan><tspan dy="-3"> [kNm]</tspan></text>
<text x="417" y="252" class="k">Moments M<tspan dy="3">Z</tspan><tspan dy="-3"> [kNm]</tspan></text>
<text x="417" y="269" class="q">Global Forces p<tspan dy="3">X</tspan><tspan dy="-3"> [Pa]</tspan></text>
<text x="417" y="888" class="m">max F<tspan dy="3">X</tspan><tspan dy="-3"> : 0.000 | min F</tspan><tspan dy="3">X</tspan><tspan dy="-3"> : 0.000 kN</tspan></text>
<text x="417" y="905" class="m">max F<tspan dy="3">Y</tspan><tspan dy="-3"> : 0.000 | min F</tspan><tspan dy="3">Y</tspan><tspan dy="-3"> : 0.000 kN</tspan></text>
<text x="417" y="922" class="m">max F<tspan dy="3">Z</tspan><tspan dy="-3"> : 0.000 | min F</tspan><tspan dy="3">Z</tspan><tspan dy="-3"> : 0.000 kN</tspan></text>
<text x="417" y="939" class="m">max M<tspan dy="3">X</tspan><tspan dy="-3"> : 0.00 | min M</tspan><tspan dy="3">X</tspan><tspan dy="-3"> : 0.00 kNm</tspan></text>
<text x="417" y="956" class="m">max M<tspan dy="3">Y</tspan><tspan dy="-3"> : 0.00 | min M</tspan><tspan dy="3">Y</tspan><tspan dy="-3"> : 0.00 kNm</tspan></text>
<text x="417" y="973" class="m">max M<tspan dy="3">Z</tspan><tspan dy="-3"> : 0.00 | min M</tspan><tspan dy="3">Z</tspan><tspan dy="-3"> : 0.00 kNm</tspan></text>
<text x="417" y="990" class="m">max p<tspan dy="3">X</tspan><tspan dy="-3"> : 58.4 | min p</tspan><tspan dy="3">X</tspan><tspan dy="-3"> : -7.7 Pa</tspan></text>
</g>
<!-- mini axis -->
<path d="M470 819 493 814" stroke="#e00" stroke-width="2.4"/><path d="M490 810 499 813 492 818z" fill="#e00"/>
<path d="M470 819 494 826" stroke="#0c0" stroke-width="2.4"/><path d="M492 821 501 827 491 830z" fill="#0c0"/>
<path d="M470.500 820V850" stroke="#00d" stroke-width="2"/><path d="M467 849H474L470.500 857z" fill="#00d"/>
<circle cx="470.500" cy="819" r="3" fill="#e8d000"/>
<text x="501" y="814" style="fill:#f22">X</text><text x="503" y="833" style="fill:#2c2">Y</text><text x="466" y="872" style="fill:#1414f0">Z</text>

<!-- nav cube -->
<g stroke-linejoin="round">
<path d="M1492.700 120 1445 134 1495 147.300 1542.700 133.300z" fill="#c4c4c4" stroke="#222" stroke-width="2"/>
<path d="M1445 134 1495 147.300V213.300L1445 200z" fill="#d8d8d8" stroke="#222" stroke-width="2"/>
<path d="M1495 147.300 1542.700 133.300V198.300L1495 213.300z" fill="#d8d8d8" stroke="#222" stroke-width="2"/>
<path d="M1457 138V203M1482 144V210M1445 152 1495 165M1445 185 1495 198M1508 143V209M1531 137V202M1495 164 1542.700 151M1495 198 1542.700 184" stroke="#222" stroke-width="2.600" fill="none"/>
<path d="M1459 131 1509 145M1480 125 1530 138M1455 137 1504 124M1480 144 1528 130" stroke="#222" stroke-width="2" fill="none"/>
<path d="M1495.500 150V208" stroke="#fff" stroke-width=".8"/>
<path d="M1478 132 1497 127 1506 133 1488 137z" fill="#c0c4d8"/>
<text x="1463" y="181" style="font-size:14px;font-weight:bold;fill:#e89090">+X</text><text x="1512" y="178" style="font-size:13px;font-weight:bold;fill:#90d090">-Y</text>
</g>

<!-- Control panel -->
<rect x="1567" y="98" width="352" height="900" fill="#f7f7f7"/>
<rect x="1567" y="121" width="352" height="41" fill="#fff"/>
<rect x="1567" y="99" width="352" height="22" fill="#d6e4f2"/>
<path d="M1566.500 99V998" stroke="#c8c8d4"/>
<text x="1572" y="114" class="h" textLength="75">Control Panel</text>
<path d="M1883 107V115H1890V107zM1885 107V105H1892V112H1890" fill="none" stroke="#333" stroke-width="1.2"/><path d="M1904 106 1912 114M1912 106 1904 114" stroke="#333" stroke-width="2"/>
<text x="1577" y="137" textLength="328">Distribution of Loads | Load using RWIND and Ponding | Global</text>
<text x="1577" y="150">p<tspan class="s" dy="1" fill="#666">X</tspan><tspan dy="-1"> [Pa]</tspan></text>
<g>
<text class="n e" x="1696" y="185">58.4</text><text class="n e" x="1696" y="211">52.4</text><text class="n e" x="1696" y="237">46.4</text><text class="n e" x="1696" y="263">40.4</text><text class="n e" x="1696" y="289">34.4</text><text class="n e" x="1696" y="315">28.4</text><text class="n e" x="1696" y="341">22.3</text><text class="n e" x="1696" y="367">16.3</text><text class="n e" x="1696" y="393">10.3</text><text class="n e" x="1696" y="419">4.3</text><text class="n e" x="1696" y="445">-1.7</text><text class="n e" x="1696" y="471">-7.7</text>
<text class="n e p" x="1801" y="198">19.44 %</text><text class="n e p" x="1801" y="224">19.88 %</text><text class="n e p" x="1801" y="250">18.00 %</text><text class="n e p" x="1801" y="276">14.44 %</text><text class="n e p" x="1801" y="302">9.50 %</text><text class="n e p" x="1801" y="328">5.94 %</text><text class="n e p" x="1801" y="354">1.69 %</text><text class="n e p" x="1801" y="380">8.44 %</text><text class="n e p" x="1801" y="406">1.88 %</text><text class="n e p" x="1801" y="432">0.69 %</text><text class="n e p" x="1801" y="458">0.13 %</text>
</g>
<rect x="1709" y="182" width="41" height="24" fill="#b90000"/><rect x="1709" y="208" width="41" height="24" fill="#f00"/><rect x="1709" y="234" width="41" height="24" fill="#ffaa00"/><rect x="1709" y="260" width="41" height="24" fill="#d2d000"/><rect x="1709" y="286" width="41" height="24" fill="#ff0"/><rect x="1709" y="312" width="41" height="24" fill="#0f0"/><rect x="1709" y="338" width="41" height="24" fill="#00e680"/><rect x="1709" y="364" width="41" height="24" fill="#0ff"/><rect x="1709" y="390" width="41" height="24" fill="#09f"/><rect x="1709" y="416" width="41" height="24" fill="#00f"/><rect x="1709" y="442" width="41" height="24" fill="#0000a0"/>
<rect x="1816" y="184" width="4" height="288" fill="#dfe3e3"/>
<rect x="1808" y="174" width="21" height="10" fill="#0078d4"/><rect x="1808" y="461" width="21" height="10" fill="#0078d4"/>
<!-- CP bottom -->
<rect x="1568" y="939" width="351" height="33" fill="#fff"/>
<path d="M1606 972H1919" stroke="#c8c8d4"/>
<rect x="1568" y="972" width="38" height="26" fill="#fff"/>
<rect x="1606" y="972" width="37" height="25" fill="#eee" stroke="#c8c8d4"/><rect x="1643" y="972" width="40" height="25" fill="#eee" stroke="#c8c8d4"/>
<path d="M1578 979h3v2h-3z" fill="#d22"/><path d="M1578 983h3v2h-3z" fill="#f90"/><path d="M1578 987h3v2h-3z" fill="#2b2"/><path d="M1578 991h3v2h-3z" fill="#11a"/><path d="M1578 976h3v2h-3z" fill="#b00"/><use href="#sf" x="1589" y="987"/>
<path d="M1616 980H1630M1623 976V992M1618 992H1628" stroke="#666"/><path d="M1616 980 1613 987H1619zM1630 980 1627 987H1633z" fill="#999" stroke="#666"/>
<rect x="1656" y="981" width="7" height="11" fill="#fff" stroke="#777"/><rect x="1660" y="976" width="3" height="3" fill="#e11"/><path d="M1663 979 1670 986 1666 986z" fill="#fff" stroke="#555"/>
<!-- avatar -->
<ellipse cx="1860" cy="963" rx="24" ry="25" fill="#e6e9f1"/>
<g clip-path="url(#av)">
<path d="M1845 978C1841 962 1842 946 1860 943 1878 946 1879 962 1875 978 1870 982 1850 982 1845 978z" fill="#8f7050"/>
<path d="M1848 950C1854 945 1866 945 1872 950 1870 956 1860 950 1852 958 1849 962 1850 968 1848 972 1845 964 1846 956 1848 950z" fill="#a88a66"/>
<ellipse cx="1860" cy="965" rx="9.500" ry="12" fill="#e0b498"/>
<rect x="1856" y="974" width="8" height="8" fill="#d8a88a"/>
<path d="M1842 990C1844 983 1851 981 1856 979L1860 984 1864 979C1869 981 1876 983 1878 990z" fill="#4d7fb0"/>
<path d="M1854 979 1860 986 1866 979 1860 990z" fill="#eac3a8"/>
<rect x="1852.500" y="961" width="6.500" height="4.500" rx="1.500" fill="#6c7a82" stroke="#222" stroke-width="1"/><rect x="1861" y="961" width="6.500" height="4.500" rx="1.500" fill="#6c7a82" stroke="#222" stroke-width="1"/>
<path d="M1856.500 972C1859 973.500 1861 973.500 1863.500 972" stroke="#fff" stroke-width="1.200" fill="none"/>
</g>
<rect x="1889" y="945" width="26" height="21" fill="#cde6f9" stroke="#0d5fa6"/><path d="M1896 948V963M1905 948V963" stroke="#aaa" stroke-width="3"/><path d="M1896 949v3" stroke="#1746c8" stroke-width="3"/><path d="M1896 958v3" stroke="#e90" stroke-width="3"/><path d="M1905 950v3" stroke="#0cc" stroke-width="3"/><path d="M1905 955v3" stroke="#2c2" stroke-width="3"/>

<!-- bottom toolbar -->
<rect x="0" y="997.500" width="1919" height="25.500" fill="#f6f6f6"/>
<path d="M0 997.500H1567M1567 998H1919" stroke="#e0e0e0"/>
<use href="#ga" x="13" y="1011"/>
<rect x="27" y="1000" width="197" height="21" fill="#e8e8f2"/><rect x="31" y="1005" width="10" height="12" fill="#ccffff"/><text x="46" y="1015" textLength="70">1 - Global XYZ</text><use href="#chv" x="215" y="1010"/>
<g>
<use href="#sp" x="228" y="1011"/><use href="#bx1" x="244" y="1011"/><use href="#bx2" x="267" y="1011"/><use href="#bx3" x="291" y="1011"/><use href="#bx4" x="316" y="1011"/><use href="#bx5" x="340" y="1011"/><use href="#sp" x="355" y="1011"/><use href="#t1" x="370" y="1011"/><use href="#t2" x="395" y="1011"/><use href="#t3" x="418" y="1011"/><use href="#d" x="436" y="1011"/><use href="#t4" x="454" y="1011"/><use href="#t5" x="478" y="1011"/><use href="#t6" x="503" y="1011"/><use href="#sp" x="518" y="1011"/><use href="#ln2" x="532" y="1011"/><use href="#d" x="551" y="1011"/><use href="#nm" x="569" y="1011"/><use href="#d" x="587" y="1011"/><use href="#sp" x="598" y="1011"/><use href="#vb" x="612" y="1011"/><path d="M630 1002 636 1020" stroke="#333"/><circle cx="632" cy="1004" r="1.600" fill="#e11"/>
<path d="M640 1004 641 1020" stroke="#999"/>
<use href="#ln6" x="660" y="1011"/><use href="#d" x="678" y="1011"/><use href="#ln" x="697" y="1011"/><use href="#ln3" x="722" y="1011"/><use href="#ln4" x="745" y="1011"/><use href="#ln2" x="769" y="1011"/><use href="#ln" x="793" y="1011"/><use href="#ln5" x="817" y="1011"/><use href="#ln6" x="840" y="1011"/><use href="#sp" x="856" y="1011"/><use href="#li" x="873" y="1011"/><use href="#d" x="889" y="1011"/><use href="#ln4" x="907" y="1011"/><use href="#ln7" x="932" y="1011"/><use href="#ln7" x="956" y="1011"/>
</g>
<use href="#ac" x="1296.500" y="1010.500"/><use href="#ac" x="1351" y="1010.500"/><use href="#ac" x="1406" y="1010.500"/><use href="#ac" x="1475" y="1010.500"/><use href="#ac" x="1499" y="1010.500"/><use href="#ac" x="1523" y="1010.500"/><use href="#ac" x="1546" y="1010.500"/><use href="#ac" x="1811" y="1010.500"/><use href="#ac" x="1859" y="1010.500"/><use href="#ac" x="1883" y="1010.500"/><use href="#ac" x="1907" y="1010.500"/>
<g>
<use href="#gr" x="1296" y="1012"/><use href="#ey" x="1300" y="1006"/><use href="#gr" x="1327" y="1012"/><use href="#st" x="1322" y="1006"/><use href="#w" x="1331" y="1006"/><use href="#gr" x="1351" y="1012"/><use href="#ey" x="1355" y="1006"/><use href="#ds" x="1381" y="1012"/><use href="#st" x="1377" y="1006"/><use href="#ds" x="1406" y="1012"/><use href="#ey" x="1410" y="1006"/><use href="#ang" x="1443" y="1012"/><use href="#gr" x="1473" y="1012"/><use href="#mg" x="1478" y="1010"/><use href="#mg" x="1499" y="1011"/><use href="#sq" x="1523" y="1011"/><use href="#sx" x="1546" y="1011"/><use href="#sxx" x="1570" y="1011"/><use href="#lls" x="1594" y="1011"/><use href="#sl" x="1618" y="1011"/><use href="#sl2" x="1642" y="1011"/><use href="#to" x="1666" y="1011"/><use href="#oo" x="1690" y="1011"/><use href="#z1" x="1714" y="1011"/><use href="#z2" x="1739" y="1011"/><use href="#z1" x="1762" y="1011"/><use href="#z4" x="1786" y="1011"/><use href="#gr" x="1811" y="1011"/><use href="#ds" x="1834" y="1011"/><use href="#lay" x="1859" y="1011"/><use href="#rb" x="1883" y="1011"/><use href="#nd" x="1907" y="1011"/>
</g>
<!-- status bar -->
<rect x="0" y="1023" width="1919" height="16" fill="#e8e8f2"/>
<path d="M1315.500 1024V1038M1421.500 1024V1038M1627.500 1024V1038M1693.500 1024V1038M1769.500 1024V1038M1845.500 1024V1038" stroke="#cfcfd8"/>
<text x="1228" y="1036" textLength="77">Visibility mode</text><text x="1426" y="1036" textLength="72.600">CS: Global XYZ</text><text x="1632" y="1036" textLength="45">Plane: XY</text>
</svg>
</body></html>
